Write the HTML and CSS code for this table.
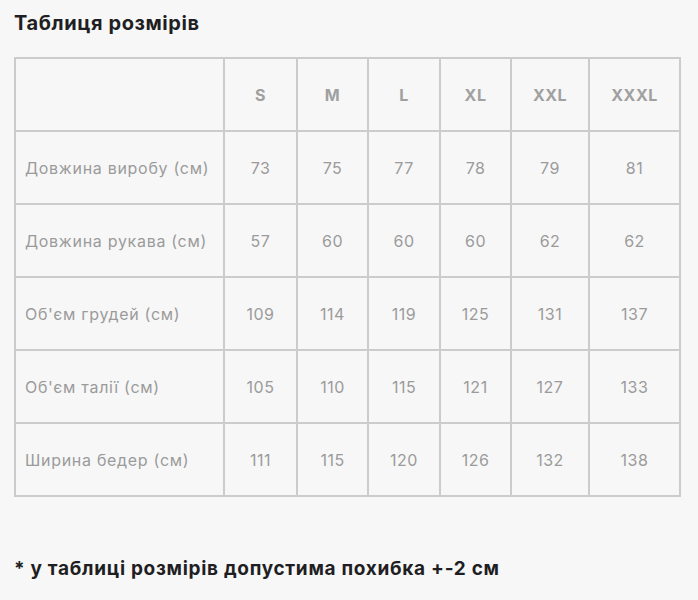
FILE: index.html
```html
<!DOCTYPE html>
<html lang="uk">
<head>
<meta charset="utf-8">
<title>Таблиця розмірів</title>
<link rel="stylesheet" href="styles.css">
</head>
<body>
<div class="page">
  <h2 class="title">Таблиця розмірів</h2>
  <table class="sizes">
    <colgroup>
      <col class="c-label"><col class="c-s"><col class="c-m"><col class="c-l"><col class="c-xl"><col class="c-xxl"><col class="c-xxxl">
    </colgroup>
    <thead>
      <tr><th></th><th>S</th><th>M</th><th>L</th><th>XL</th><th>XXL</th><th>XXXL</th></tr>
    </thead>
    <tbody>
      <tr><td class="label">Довжина виробу (см)</td><td>73</td><td>75</td><td>77</td><td>78</td><td>79</td><td>81</td></tr>
      <tr><td class="label">Довжина рукава (см)</td><td>57</td><td>60</td><td>60</td><td>60</td><td>62</td><td>62</td></tr>
      <tr><td class="label">Об'єм грудей (см)</td><td>109</td><td>114</td><td>119</td><td>125</td><td>131</td><td>137</td></tr>
      <tr><td class="label">Об'єм талії (см)</td><td>105</td><td>110</td><td>115</td><td>121</td><td>127</td><td>133</td></tr>
      <tr><td class="label">Ширина бедер (см)</td><td>111</td><td>115</td><td>120</td><td>126</td><td>132</td><td>138</td></tr>
    </tbody>
  </table>
  <p class="note">* у таблиці розмірів допустима похибка +-2 см</p>
</div>
</body>
</html>
```
FILE: styles.css
```css
html, body {
  margin: 0;
  padding: 0;
  background: #f7f7f7;
}
body {
  font-family: Inter, "Noto Sans", "Liberation Sans", sans-serif;
  color: #222;
}
.page {
  padding: 10px 14px;
}
.title {
  margin: 0;
  font-size: 20px;
  line-height: 26px;
  font-weight: 700;
  letter-spacing: 0.6px;
  color: #1f1f23;
}
.sizes {
  margin-top: 21px;
  border-collapse: collapse;
  table-layout: fixed;
  width: 665px;
  border: 2px solid #cccccc;
}
.c-label { width: 209px; }
.c-s { width: 73px; }
.c-m { width: 71px; }
.c-l { width: 72px; }
.c-xl { width: 71px; }
.c-xxl { width: 78px; }
.c-xxxl { width: 91px; }
.sizes th, .sizes td {
  border: 2px solid #cccccc;
  height: 71px;
  padding: 0;
  text-align: center;
  vertical-align: middle;
  font-size: 16px;
  letter-spacing: 0.5px;
  color: #9b9b9b;
}
.sizes th {
  font-weight: 700;
  color: #a0a0a0;
}
.sizes td {
  font-weight: 400;
}
.sizes td.label {
  text-align: left;
  padding-left: 9px;
  letter-spacing: 0.7px;
}
.note {
  margin: 60px 0 0;
  font-size: 19px;
  font-weight: 700;
  letter-spacing: 0.7px;
  color: #1f1f23;
}
```
